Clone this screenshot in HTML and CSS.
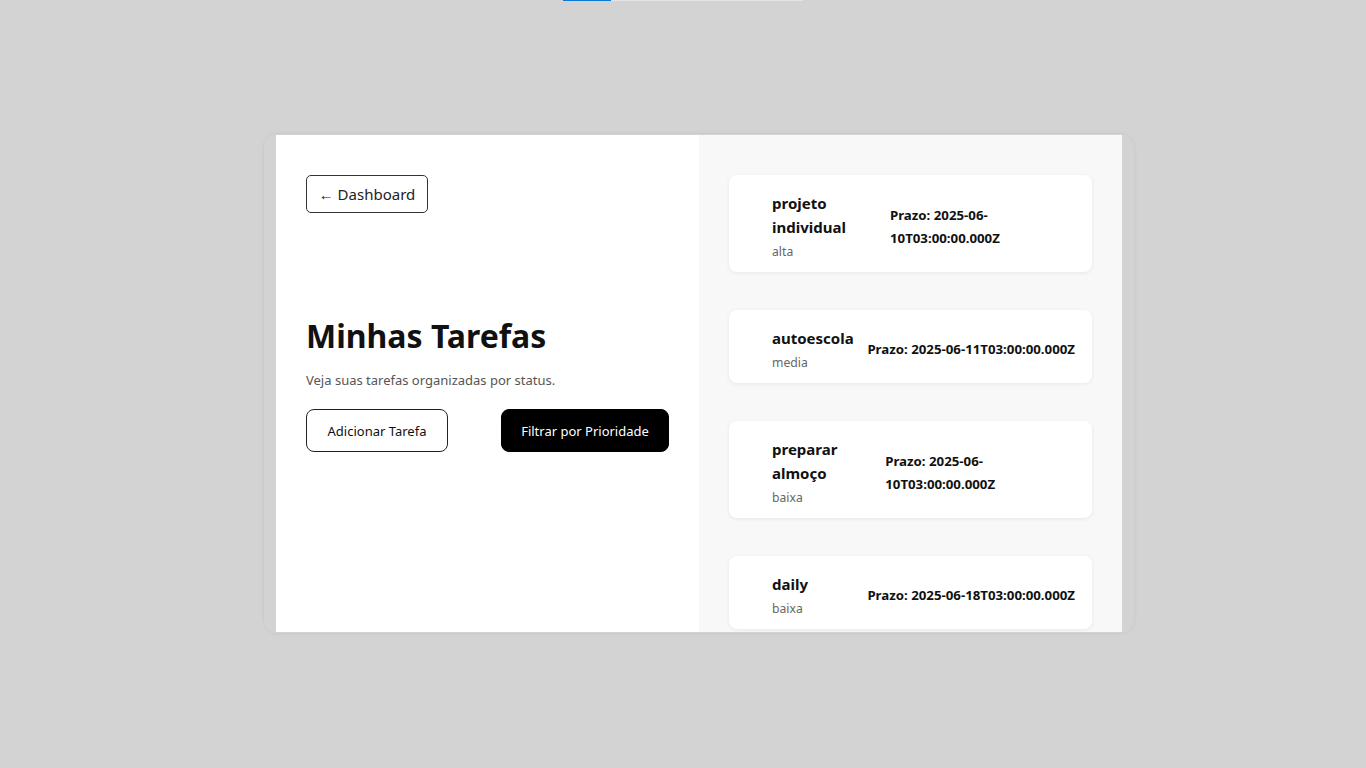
FILE: index.html
```html
<!DOCTYPE html>
<html lang="pt-BR">
<head>
<meta charset="utf-8">
<title>Minhas Tarefas</title>
<link rel="stylesheet" href="styles.css">
</head>
<body>
<div class="loader"><div class="loader-fill"></div></div>
<div class="shell">
  <div class="panel">
    <section class="left">
      <button class="back-btn">← Dashboard</button>
      <div class="intro">
        <h1 class="title">Minhas Tarefas</h1>
        <p class="subtitle">Veja suas tarefas organizadas por status.</p>
        <div class="actions">
          <button class="btn btn-outline">Adicionar Tarefa</button>
          <button class="btn btn-dark">Filtrar por Prioridade</button>
        </div>
      </div>
    </section>
    <section class="right">
      <div class="card">
        <div class="card-info">
          <h3 class="card-title">projeto individual</h3>
          <span class="card-priority">alta</span>
        </div>
        <p class="card-date">Prazo: 2025-06-10T03:00:00.000Z</p>
      </div>
      <div class="card">
        <div class="card-info">
          <h3 class="card-title">autoescola</h3>
          <span class="card-priority">media</span>
        </div>
        <p class="card-date">Prazo: 2025-06-11T03:00:00.000Z</p>
      </div>
      <div class="card">
        <div class="card-info">
          <h3 class="card-title">preparar almoço</h3>
          <span class="card-priority">baixa</span>
        </div>
        <p class="card-date">Prazo: 2025-06-10T03:00:00.000Z</p>
      </div>
      <div class="card">
        <div class="card-info">
          <h3 class="card-title">daily</h3>
          <span class="card-priority">baixa</span>
        </div>
        <p class="card-date">Prazo: 2025-06-18T03:00:00.000Z</p>
      </div>
    </section>
  </div>
</div>
</body>
</html>
```
FILE: styles.css
```css
* { box-sizing: border-box; }
html, body { margin: 0; padding: 0; }
body {
  background: #d3d3d3;
  font-family: "Noto Sans", "Open Sans", sans-serif;
  color: #111;
  height: 768px;
  overflow: hidden;
}
.loader {
  position: absolute;
  top: 0;
  left: 563px;
  width: 240px;
  height: 1px;
  background: #e4e4e4;
}
.loader-fill {
  width: 48px;
  height: 1px;
  background: #0a78d6;
}
.shell {
  margin: 133px 0 0 263px;
  width: 872px;
  height: 501px;
  padding: 1px 12px;
  border-radius: 14px;
  border: 1px solid rgba(0,0,0,0.035);
  box-shadow: 0 0 4px rgba(0,0,0,0.03);
}
.panel {
  display: flex;
  height: 497px;
}
.left {
  width: 423px;
  background: #fff;
  padding: 40px 30px;
  display: flex;
  flex-direction: column;
  align-items: flex-start;
}
.back-btn {
  font-family: inherit;
  font-size: 15px;
  color: #222;
  background: #fff;
  border: 1px solid #333;
  border-radius: 5px;
  height: 38px;
  width: 122px;
  padding: 0;
}
.intro {
  margin-top: 104px;
  width: 100%;
}
.title {
  margin: 0;
  font-size: 32px;
  line-height: 38px;
  font-weight: 700;
  color: #111;
}
.subtitle {
  margin: 15px 0 0;
  font-size: 13px;
  line-height: 20px;
  color: #555;
}
.actions {
  margin-top: 19px;
  display: flex;
  justify-content: space-between;
}
.btn {
  font-family: inherit;
  font-size: 13px;
  height: 43px;
  border-radius: 8px;
  padding: 0;
}
.btn-outline {
  width: 142px;
  background: #fff;
  color: #111;
  border: 1px solid #222;
}
.btn-dark {
  width: 168px;
  background: #000;
  color: #fff;
  border: 1px solid #000;
}
.right {
  width: 423px;
  background: #f8f8f8;
  padding: 40px 30px;
  display: flex;
  flex-direction: column;
  gap: 38px;
  overflow: hidden;
}
.card {
  flex-shrink: 0;
  background: #fff;
  border-radius: 8px;
  box-shadow: 0 1px 4px rgba(0,0,0,0.07);
  padding: 16px 17px 10px 43px;
  display: flex;
  align-items: center;
  justify-content: space-between;
}
.card-info {
  display: flex;
  flex-direction: column;
}
.card-title {
  margin: 0 0 3px;
  font-size: 15px;
  line-height: 24px;
  font-weight: 700;
  color: #111;
}
.card-priority {
  font-size: 12.2px;
  line-height: 20px;
  color: #666;
}
.card-date {
  margin: 0;
  font-size: 13.25px;
  line-height: 23px;
  font-weight: 700;
  color: #111;
}
```
